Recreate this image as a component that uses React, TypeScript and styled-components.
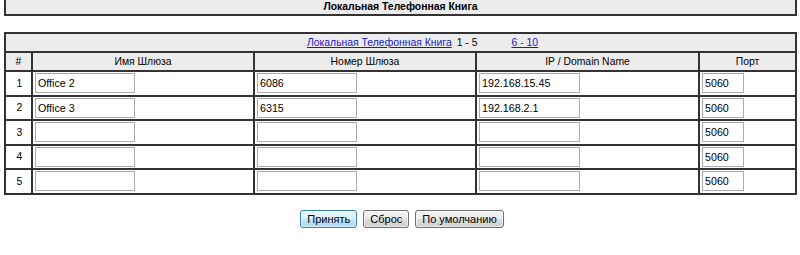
import React from 'react';
import styled, { createGlobalStyle } from 'styled-components';

const GlobalStyle = createGlobalStyle`
  body {
    margin: 0;
    background: #ffffff;
    font-family: "Liberation Sans", Arial, sans-serif;
    font-size: 10.4px;
    color: #000;
  }
`;

const Page = styled.div`
  width: 800px;
  padding: 0 3px 0 4px;
  box-sizing: border-box;
`;

const TitleBar = styled.div`
  height: 14px;
  border: 2px solid #333;
  border-top: none;
  background: #ececec;
  font-weight: bold;
  text-align: center;
  line-height: 14px;
`;

const Table = styled.table`
  margin-top: 16px;
  width: 100%;
  border-collapse: collapse;
  table-layout: fixed;
  border: 2px solid #333;
`;

const HeadCell = styled.td<{ $shift?: number }>`
  height: 17px;
  padding: 0 0 0 ${(p) => p.$shift ?? 0}px;
  border: 2px solid #333;
  background: #ececec;
  text-align: center;
  vertical-align: middle;
`;

const Cell = styled.td<{ $center?: boolean }>`
  height: 22.5px;
  padding: 0 0 0 2px;
  border: 2px solid #333;
  background: #fff;
  text-align: ${(p) => (p.$center ? 'center' : 'left')};
  vertical-align: middle;
`;

const Link = styled.a`
  color: #1a1acc;
  text-decoration: underline;
  cursor: pointer;
`;

const Range = styled.span`
  margin: 0 34px 0 5px;
`;

const Field = styled.input<{ $w: number }>`
  display: block;
  box-sizing: border-box;
  width: ${(p) => p.$w}px;
  height: 20px;
  margin: 0;
  padding: 0 2px;
  border: 1px solid #abadb3;
  border-top-color: #a3a6ad;
  background: #fff;
  font-family: "Liberation Sans", Arial, sans-serif;
  font-size: 10.7px;
  color: #000;
  outline: none;
`;

const Buttons = styled.div`
  display: flex;
  justify-content: center;
  gap: 6px;
  margin-top: 15px;
  padding-left: 3px;
`;

const Button = styled.button<{ $primary?: boolean }>`
  box-sizing: border-box;
  height: 18px;
  padding: 0 6px;
  border: 1px solid ${(p) => (p.$primary ? '#3c7fb1' : '#707070')};
  border-radius: 3px;
  background: ${(p) =>
    p.$primary
      ? 'linear-gradient(#eaf6fd 0%, #d9f0fc 50%, #bee6fd 51%, #a7d9f5 100%)'
      : 'linear-gradient(#f2f2f2 0%, #ebebeb 50%, #dddddd 51%, #cfcfcf 100%)'};
  box-shadow: inset 0 0 0 1px rgba(255, 255, 255, 0.6);
  font-family: "Liberation Sans", Arial, sans-serif;
  font-size: 11px;
  line-height: 16px;
  color: #000;
`;

type Row = { name: string; number: string; host: string; port: string };

const rows: Row[] = [
  { name: 'Office 2', number: '6086', host: '192.168.15.45', port: '5060' },
  { name: 'Office 3', number: '6315', host: '192.168.2.1', port: '5060' },
  { name: '', number: '', host: '', port: '5060' },
  { name: '', number: '', host: '', port: '5060' },
  { name: '', number: '', host: '', port: '5060' },
];

export default function App() {
  return (
    <Page>
      <GlobalStyle />
      <TitleBar>Локальная Телефонная Книга</TitleBar>
      <Table>
        <colgroup>
          <col style={{ width: 27 }} />
          <col style={{ width: 222 }} />
          <col style={{ width: 222 }} />
          <col style={{ width: 223 }} />
          <col />
        </colgroup>
        <tbody>
          <tr>
            <HeadCell colSpan={5} $shift={44}>
              <Link>Локальная Телефонная Книга</Link>
              <Range>1 - 5</Range>
              <Link>6 - 10</Link>
            </HeadCell>
          </tr>
          <tr>
            <HeadCell>#</HeadCell>
            <HeadCell>Имя Шлюза</HeadCell>
            <HeadCell>Номер Шлюза</HeadCell>
            <HeadCell>IP / Domain Name</HeadCell>
            <HeadCell>Порт</HeadCell>
          </tr>
          {rows.map((r, i) => (
            <tr key={i}>
              <Cell $center>{i + 1}</Cell>
              <Cell>
                <Field $w={100} defaultValue={r.name} />
              </Cell>
              <Cell>
                <Field $w={100} defaultValue={r.number} />
              </Cell>
              <Cell>
                <Field $w={101} defaultValue={r.host} />
              </Cell>
              <Cell>
                <Field $w={42} defaultValue={r.port} />
              </Cell>
            </tr>
          ))}
        </tbody>
      </Table>
      <Buttons>
        <Button $primary>Принять</Button>
        <Button>Сброс</Button>
        <Button>По умолчанию</Button>
      </Buttons>
    </Page>
  );
}
